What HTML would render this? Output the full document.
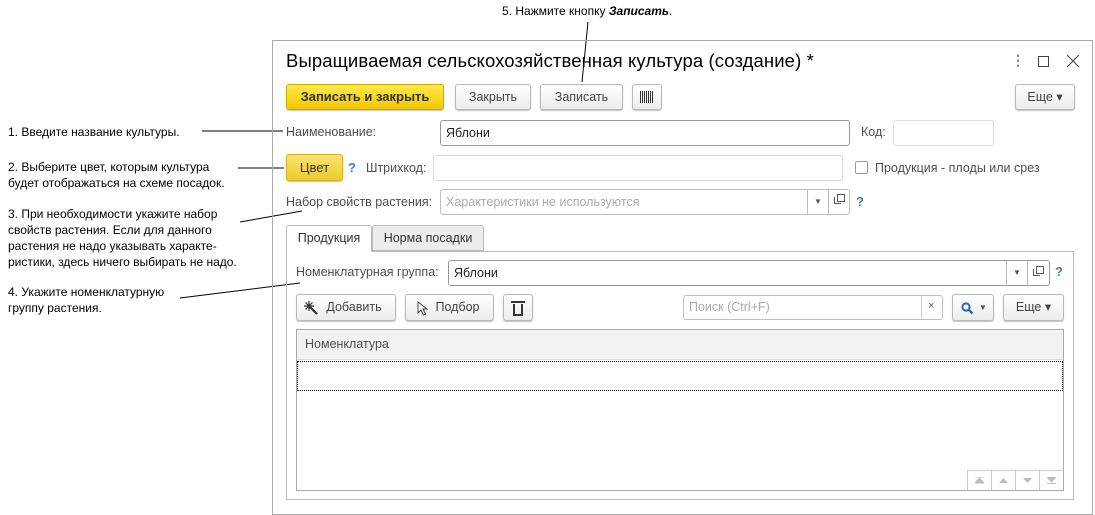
<!DOCTYPE html>
<html><head><meta charset="utf-8"><style>
body{margin:0;width:1095px;height:515px;background:#fff;position:relative;overflow:hidden;font-family:"Liberation Sans",Arial,sans-serif;font-size:12px;color:#333}
.a{position:absolute;white-space:nowrap}
.ann{position:absolute;font-size:12px;color:#000;line-height:16px}
.btn{position:absolute;box-sizing:border-box;border:1px solid #b8b8b8;border-radius:3px;background:linear-gradient(#fff,#ececec);box-shadow:0 1px 1px rgba(0,0,0,.25);color:#444;text-align:center;font-size:12.5px}
.inp{position:absolute;box-sizing:border-box;border:1px solid #bfbfbf;border-radius:3px;background:#fff;font-size:12.5px;padding-left:5px}
.lbl{position:absolute;color:#4d4d4d;font-size:12.5px}
.q{position:absolute;color:#3a7fc0;font-weight:bold;font-size:13px}
</style></head><body>
<svg class="a" style="left:0;top:0" width="1095" height="515">
<line x1="588" y1="22" x2="582" y2="82" stroke="#000"/>
<line x1="202" y1="131" x2="283" y2="131" stroke="#000"/>
<line x1="238" y1="168" x2="284" y2="168" stroke="#000"/>
<line x1="240" y1="222" x2="302" y2="211" stroke="#000"/>
<line x1="180" y1="298" x2="300" y2="283" stroke="#000"/>
</svg>
<div class="ann" style="left:502px;top:3px">5. Нажмите кнопку <b><i>Записать</i></b>.</div>
<div class="ann" style="left:8px;top:124px">1. Введите название культуры.</div>
<div class="ann" style="left:8px;top:159px">2. Выберите цвет, которым культура<br>будет отображаться на схеме посадок.</div>
<div class="ann" style="left:8px;top:206px">3. При необходимости укажите набор<br>свойств растения. Если для данного<br>растения не надо указывать характе-<br>ристики, здесь ничего выбирать не надо.</div>
<div class="ann" style="left:8px;top:284px">4. Укажите номенклатурную<br>группу растения.</div>

<div class="a" style="left:272px;top:40px;width:819px;height:473px;border:1px solid #aaa"></div>
<div class="a" style="left:286px;top:50px;font-size:18.5px;color:#000;letter-spacing:0.1px">Выращиваемая сельскохозяйственная культура (создание) *</div>
<div class="a" style="left:1011px;top:52px;font-size:14px;color:#777;font-weight:bold">⋮</div>
<div class="a" style="left:1038px;top:56px;width:9px;height:9px;border:1px solid #444"></div>
<svg class="a" style="left:1067px;top:55px" width="12" height="12"><path d="M0 0L12 12M12 0L0 12" stroke="#555" stroke-width="1.2"/></svg>

<div class="btn" style="left:286px;top:84px;width:158px;height:26px;line-height:24px;background:linear-gradient(#ffe94a,#f2c800);border-color:#d1ac00;color:#333;font-weight:bold;font-size:13px">Записать и закрыть</div>
<div class="btn" style="left:455px;top:84px;width:76px;height:26px;line-height:24px">Закрыть</div>
<div class="btn" style="left:540px;top:84px;width:83px;height:26px;line-height:24px">Записать</div>
<div class="btn" style="left:632px;top:84px;width:30px;height:26px"><svg width="14" height="12" style="margin-top:6px"><g stroke="#333"><line x1="0.5" y1="0" x2="0.5" y2="12"/><line x1="2.5" y1="0" x2="2.5" y2="12"/><line x1="4.5" y1="0" x2="4.5" y2="12"/><line x1="6.5" y1="0" x2="6.5" y2="12"/><line x1="8.5" y1="0" x2="8.5" y2="12"/><line x1="10.5" y1="0" x2="10.5" y2="12"/><line x1="12.5" y1="0" x2="12.5" y2="12"/></g></svg></div>
<div class="btn" style="left:1015px;top:84px;width:60px;height:26px;line-height:24px">Еще ▾</div>

<div class="lbl" style="left:286px;top:125px">Наименование:</div>
<div class="inp" style="left:440px;top:120px;width:410px;height:26px;line-height:24px;border-color:#999;color:#222">Яблони</div>
<div class="lbl" style="left:861px;top:125px">Код:</div>
<div class="inp" style="left:893px;top:120px;width:101px;height:26px;border-color:#ddd"></div>

<div class="btn" style="left:286px;top:154px;width:57px;height:27px;line-height:25px;background:linear-gradient(#fbe373,#eccb2c);border-color:#d7b21d;color:#333;font-size:13px">Цвет</div>
<div class="q" style="left:348px;top:160px">?</div>
<div class="lbl" style="left:366px;top:161px">Штрихкод:</div>
<div class="inp" style="left:433px;top:155px;width:410px;height:26px;border-color:#ddd"></div>
<div class="a" style="left:855px;top:161px;width:13px;height:13px;border:1px solid #999;border-radius:2px;box-sizing:border-box"></div>
<div class="lbl" style="left:875px;top:161px">Продукция - плоды или срез</div>

<div class="lbl" style="left:286px;top:195px">Набор свойств растения:</div>
<div class="inp" style="left:440px;top:189px;width:410px;height:26px;line-height:24px;color:#aaa">Характеристики не используются</div>
<div class="a" style="left:807px;top:190px;width:1px;height:24px;background:#bbb"></div>
<div class="a" style="left:828px;top:190px;width:1px;height:24px;background:#bbb"></div>
<div class="a" style="left:814px;top:197px;font-size:8px;color:#555">▼</div>
<div class="a" style="left:834px;top:197px;width:6px;height:6px;border:1px solid #555;border-top:none;border-right:none"></div><div class="a" style="left:837px;top:194px;width:6px;height:6px;border:1px solid #555"></div>
<div class="q" style="left:856px;top:194px">?</div>

<div class="a" style="left:286px;top:251px;width:788px;height:249px;border:1px solid #bbb;box-sizing:border-box"></div>
<div class="a" style="left:372px;top:225px;width:112px;height:26px;border:1px solid #bbb;border-radius:3px 3px 0 0;background:#ececec;box-sizing:border-box;text-align:center;line-height:25px;font-size:12.5px">Норма посадки</div>
<div class="a" style="left:286px;top:225px;width:86px;height:27px;border:1px solid #bbb;border-bottom:none;border-radius:3px 3px 0 0;background:#fff;box-sizing:border-box;text-align:center;line-height:25px;font-size:12.5px">Продукция</div>

<div class="lbl" style="left:296px;top:265px">Номенклатурная группа:</div>
<div class="inp" style="left:448px;top:260px;width:602px;height:26px;line-height:24px;border-color:#999;color:#222">Яблони</div>
<div class="a" style="left:1006px;top:261px;width:1px;height:24px;background:#bbb"></div>
<div class="a" style="left:1027px;top:261px;width:1px;height:24px;background:#bbb"></div>
<div class="a" style="left:1013px;top:268px;font-size:8px;color:#555">▼</div>
<div class="a" style="left:1033px;top:269px;width:6px;height:6px;border:1px solid #555;border-top:none;border-right:none"></div><div class="a" style="left:1036px;top:266px;width:6px;height:6px;border:1px solid #555"></div>
<div class="q" style="left:1055px;top:264px">?</div>

<div class="btn" style="left:296px;top:294px;width:100px;height:27px;line-height:25px;padding-left:16px"><svg style="position:absolute;left:7px;top:6px" width="14" height="14"><g stroke="#333" stroke-width="1.2"><path d="M5 0v10M0 5h10M1.5 1.5l7 7M8.5 1.5l-7 7"/><path d="M6 6l7 7" stroke-width="2.2"/></g></svg>Добавить</div>
<div class="btn" style="left:405px;top:294px;width:89px;height:27px;line-height:25px;padding-left:16px"><svg style="position:absolute;left:11px;top:6px" width="12" height="15"><path d="M1 1v11l3-3 2.5 5 2-1-2.5-5h4z" fill="#fff" stroke="#444"/></svg>Подбор</div>
<div class="btn" style="left:503px;top:294px;width:30px;height:27px"><svg width="14" height="16" style="margin-top:5px"><rect x="0" y="1" width="14" height="2" fill="#333"/><path d="M2 4h10v12H2z M4 4v10h6V4" fill="#333" fill-rule="evenodd"/></svg></div>
<div class="inp" style="left:683px;top:295px;width:260px;height:25px;line-height:23px;color:#aaa">Поиск (Ctrl+F)</div>
<div class="a" style="left:921px;top:296px;width:1px;height:23px;background:#ccc"></div>
<div class="a" style="left:928px;top:300px;font-size:11px;color:#555">×</div>
<div class="btn" style="left:952px;top:294px;width:42px;height:27px;line-height:25px"><svg style="position:absolute;left:8px;top:7px" width="13" height="13"><circle cx="5" cy="5" r="3.6" fill="none" stroke="#2d6aa8" stroke-width="2"/><path d="M7.5 7.5l4 4" stroke="#2d6aa8" stroke-width="2.4"/></svg><span style="position:absolute;left:26px;color:#555;font-size:8px">▼</span></div>
<div class="btn" style="left:1003px;top:294px;width:61px;height:27px;line-height:25px">Еще ▾</div>

<div class="a" style="left:296px;top:329px;width:768px;height:162px;border:1px solid #aaa;box-sizing:border-box"></div>
<div class="a" style="left:297px;top:330px;width:766px;height:29px;background:#f2f2f2;border-bottom:1px solid #ddd"></div>
<div class="lbl" style="left:305px;top:337px">Номенклатура</div>
<div class="a" style="left:297px;top:361px;width:766px;height:30px;border:1px dotted #000;box-sizing:border-box"></div>
<div class="a" style="left:967px;top:470px;width:96px;height:20px;border-top:1px solid #ccc;border-left:1px solid #ccc;box-sizing:border-box;display:flex">
<span style="flex:1;border-right:1px solid #ccc;position:relative"><svg style="position:absolute;left:7px;top:6px" width="9" height="7"><path d="M0 0h9M0 6l4.5-5 4.5 5z" stroke="#bbb" fill="#bbb"/></svg></span>
<span style="flex:1;border-right:1px solid #ccc;position:relative"><svg style="position:absolute;left:7px;top:7px" width="9" height="5"><path d="M0 5l4.5-5 4.5 5z" fill="#bbb"/></svg></span>
<span style="flex:1;border-right:1px solid #ccc;position:relative"><svg style="position:absolute;left:7px;top:7px" width="9" height="5"><path d="M0 0l4.5 5 4.5-5z" fill="#bbb"/></svg></span>
<span style="flex:1;position:relative"><svg style="position:absolute;left:7px;top:6px" width="9" height="7"><path d="M0 0l4.5 5 4.5-5zM0 6.5h9" stroke="#bbb" fill="#bbb"/></svg></span></div>
</body></html>
